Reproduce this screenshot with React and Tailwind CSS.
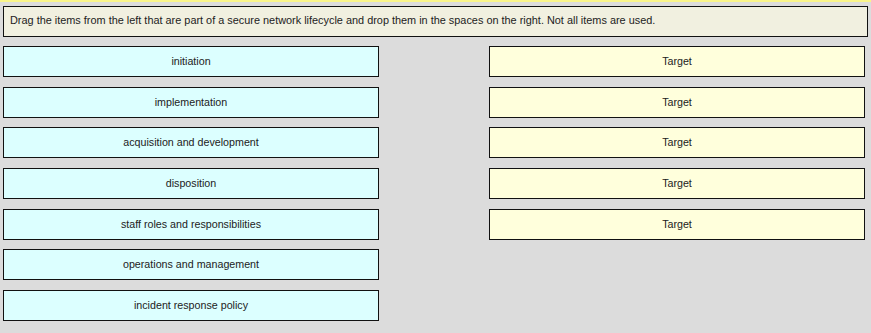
const items = [
  'initiation',
  'implementation',
  'acquisition and development',
  'disposition',
  'staff roles and responsibilities',
  'operations and management',
  'incident response policy',
];

const targets = ['Target', 'Target', 'Target', 'Target', 'Target'];

export default function App() {
  return (
    <div className="w-[871px] h-[333px] bg-[#dcdcdc] font-['Liberation_Sans',Arial,sans-serif] text-[10.7px] text-[#222] overflow-hidden">
      <div className="h-[2px] bg-[#faf58a]" />
      <div className="px-[3px] pt-[4px]">
        <div className="h-[31px] border border-[#111] bg-[#f1f0e0] flex items-center pl-[6px] pb-[2px] text-[10.9px]">
          Drag the items from the left that are part of a secure network lifecycle and drop them in the spaces on the right. Not all items are used.
        </div>
      </div>
      <div className="flex pl-[3px] pt-[9px] gap-[110px]">
        <div className="w-[376px] flex flex-col gap-[9.67px]">
          {items.map((t, i) => (
            <div
              key={i}
              className="h-[31px] border border-[#111] bg-[#dcffff] flex items-center justify-center pb-[1px]"
            >
              {t}
            </div>
          ))}
        </div>
        <div className="w-[376px] flex flex-col gap-[9.67px]">
          {targets.map((t, i) => (
            <div
              key={i}
              className="h-[31px] border border-[#111] bg-[#ffffdc] flex items-center justify-center pb-[1px]"
            >
              {t}
            </div>
          ))}
        </div>
      </div>
    </div>
  );
}
